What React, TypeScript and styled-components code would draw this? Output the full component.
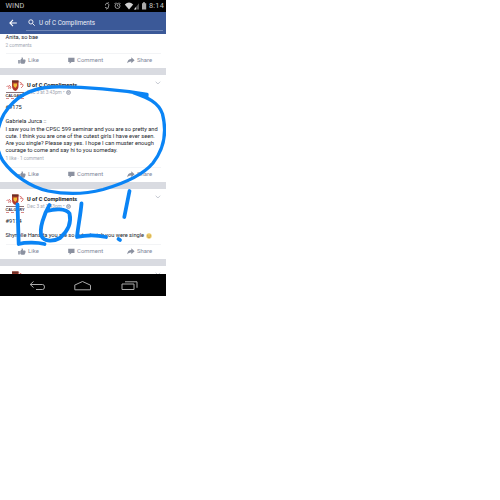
import React from 'react';
import styled, { createGlobalStyle } from 'styled-components';

const Global = createGlobalStyle`
  body { margin: 0; background: #fff; }
  * { box-sizing: border-box; }
`;

const Phone = styled.main`
  position: relative;
  display: flex;
  flex-direction: column;
  width: 166px;
  height: 296px;
  overflow: hidden;
  background: #fff;
  font-family: Roboto, sans-serif;
  color: #22252b;
`;

const StatusBar = styled.div`
  display: flex;
  align-items: center;
  height: 12px;
  flex: none;
  padding: 0 2px 0 5.5px;
  background: #000;
  color: #c4c4c4;
  font-size: 7.3px;
  line-height: 12px;
`;

const Carrier = styled.span`
  flex: 1;
  letter-spacing: 0.1px;
`;

const Clock = styled.span`
  margin-left: 1px;
  letter-spacing: 0.25px;
`;

const Header = styled.header`
  display: flex;
  align-items: center;
  height: 22px;
  flex: none;
  padding: 0 3px 0 9px;
  background: #3b5998;
`;

const SearchField = styled.div`
  display: flex;
  align-items: center;
  flex: 1;
  height: 15px;
  margin-left: 9px;
  padding-left: 2px;
  gap: 4px;
  border-bottom: 1px solid #6f86b6;
  color: #eef1f8;
  font-size: 6.3px;
  white-space: nowrap;
`;

const Feed = styled.section`
  height: 240px;
  flex: none;
  overflow: hidden;
  background: #d9dbe1;
`;

const Post = styled.article<{ $height: number }>`
  display: flex;
  flex-direction: column;
  height: ${(p) => p.$height}px;
  margin-bottom: 7px;
  padding: 0 5px 0 5.5px;
  background: #fff;
  overflow: hidden;
`;

const PostHead = styled.div`
  display: flex;
  flex: none;
  height: 29.1px;
  padding-top: 5px;
`;

const Byline = styled.div`
  flex: 1;
  margin-left: 3.5px;
`;

const Author = styled.div`
  height: 7.5px;
  margin-top: 2px;
  color: #15171c;
  font-size: 5.6px;
  line-height: 7.5px;
  font-weight: 700;
  white-space: nowrap;
`;

const Stamp = styled.div`
  display: flex;
  align-items: center;
  gap: 1.5px;
  height: 6px;
  color: #a3a8b3;
  font-size: 4.8px;
  line-height: 6px;
  white-space: nowrap;
`;

const ChevronSlot = styled.div`
  display: flex;
  align-items: flex-start;
  padding-top: 1px;
`;

const Line = styled.div<{ $track?: number }>`
  display: flex;
  align-items: center;
  gap: 2px;
  flex: none;
  height: 7.2px;
  font-size: 5.7px;
  line-height: 7.2px;
  letter-spacing: ${(p) => p.$track ?? 0}px;
  white-space: pre;
`;

const Counts = styled.div`
  flex: none;
  height: 10px;
  color: #a3a8b3;
  font-size: 4.7px;
  line-height: 10.5px;
  white-space: pre;
`;

const Actions = styled.div`
  display: grid;
  grid-template-columns: 50px 59px 1fr;
  flex: none;
  align-items: center;
  height: 15px;
  margin-top: auto;
  border-top: 1px solid #f3f4f6;
  padding: 0 0 1.5px 12.5px;
`;

const Action = styled.div`
  display: flex;
  align-items: center;
  gap: 2px;
  color: #80879a;
  font-size: 5.9px;
  line-height: 8px;
  font-weight: 400;
  letter-spacing: 0.05px;
  white-space: nowrap;
`;

const NavBar = styled.nav`
  display: flex;
  align-items: center;
  justify-content: space-between;
  height: 22px;
  flex: none;
  padding: 1px 28px 0 28.5px;
  background: #000;
`;

const Scribble = styled.svg`
  position: absolute;
  inset: 0;
  pointer-events: none;
`;

const CrestBox = styled.div`
  display: flex;
  flex-direction: column;
  width: 18px;
  height: 20px;
`;

const Wordmark = styled.div`
  height: 7px;
  border-top: 1px solid #8d7377;
  border-bottom: 1px dashed #d78986;
  color: #3c2a2f;
  font-family: "Liberation Sans", sans-serif;
  font-size: 3.9px;
  font-weight: 700;
  line-height: 5px;
  text-align: center;
`;

const Crest = () => (
  <CrestBox>
    <svg width="18" height="12" viewBox="0 0 18 12">
      <path d="M6 .5h6.500v5.500q0 3.500-3.200 5q-3.300-1.500-3.300-5z" fill="#b13a2b" />
      <path d="M6 .5h6.500v2H6z" fill="#6a3028" />
      <path d="M7.500 3.500h3.500v2.500l-1.700 2l-1.800-2z" fill="#f0bd35" />
      <path d="M.5 7q1-2 2.500-.5q1 1.500-1 2M3 5l2 2l-1 2M13.500 2l2 1l-1 2M15 4q3 0 2 2l-2 2" fill="none" stroke="#d9706e" strokeWidth=".9" />
    </svg>
    <Wordmark>CALGARY</Wordmark>
  </CrestBox>
);

const Chevron = () => (
  <svg width="6" height="4" viewBox="0 0 6 4">
    <path d="M.7.700l2.200 2.300L5.200.700" fill="none" stroke="#b8bcc6" strokeWidth=".8" />
  </svg>
);

const Thumb = () => (
  <svg width="8" height="7" viewBox="0 0 8 7">
    <path d="M.2 3h1.600v3.500H.2zM2.300 3.100L3.700 1.600V.2q1.500-.1 1.300 1.500l-.2.900h2.100q1 .3.600 1.200q.2.600-.2 1q0 .7-.4.900q0 1-.9 1H3.500L2.300 5.900z" fill="#8b91a0" />
  </svg>
);

const Bubble = () => (
  <svg width="7" height="7" viewBox="0 0 7 7">
    <path d="M.2.700h6.300v4.400H3.500L1.600 6.700V5.100H.2z" fill="#8b91a0" />
  </svg>
);

const ShareArrow = () => (
  <svg width="8" height="7" viewBox="0 0 8 7">
    <path d="M4.300.2L7.600 3.200L4.300 6.200V4.400Q1.800 4.200.2 6.300Q.6 2.100 4.300 2z" fill="#8b91a0" />
  </svg>
);

const Globe = () => (
  <svg width="5" height="5" viewBox="0 0 5 5">
    <circle cx="2.500" cy="2.500" r="2" fill="#d6d9df" stroke="#9aa0ad" strokeWidth=".8" />
    <path d="M1 1.700l1.500.4l-.5 1.400M3 1l1 1.500" fill="none" stroke="#9aa0ad" strokeWidth=".7" />
  </svg>
);

const Smiley = () => (
  <svg width="6" height="6" viewBox="0 0 6 6">
    <circle cx="3" cy="3" r="2.700" fill="#f0cf6b" />
    <path d="M1.300 2.300h1M3.700 2.300h1M1.500 3.700q1.500 1.500 3 0" fill="none" stroke="#a5793a" strokeWidth=".6" />
  </svg>
);

const StatusIcons = () => (
  <svg width="43" height="12" viewBox="0 0 43 12" fill="none" stroke="#b5b5b5" strokeWidth=".8">
    <path d="M-.8 6.500L1.700 3L4 4.500L3 8.500L-.8 7M.9 8.500l1 .8M2.700 2l1 1" />
    <circle cx="12.500" cy="6" r="2.500" />
    <path d="M12.500 4.500V6l1 .6M9.500 4l1.500-1.500M14 2.500L15.500 4" />
    <path d="M19.800 4.500Q24 .600 28.200 4.500L24 9.400z" fill="#d0d0d0" stroke="none" />
    <path d="M29 9.400h5V3.200z" fill="#555" stroke="none" />
    <path d="M29 9.400h2V7z" fill="#ddd" stroke="none" />
    <path d="M37 3.200h1v-.9h2v.9h1.200v6.400H37z" fill="#aaa" stroke="none" />
  </svg>
);

const ActionRow = () => (
  <Actions>
    <Action><Thumb />Like</Action>
    <Action><Bubble />Comment</Action>
    <Action><ShareArrow />Share</Action>
  </Actions>
);

const PostHeader = ({ date }: { date: string }) => (
  <PostHead>
    <Crest />
    <Byline>
      <Author>U of C Compliments</Author>
      <Stamp>{date}<Globe /></Stamp>
    </Byline>
    <ChevronSlot><Chevron /></ChevronSlot>
  </PostHead>
);

export default function App() {
  return (
    <>
      <Global />
      <Phone>
        <StatusBar>
          <Carrier>WIND</Carrier>
          <StatusIcons />
          <Clock>8:14</Clock>
        </StatusBar>
        <Header>
          <svg width="8" height="8" viewBox="0 0 8 8">
            <path d="M7.800 4H1M4 .9L.9 4L4 7.100" fill="none" stroke="#fff" strokeWidth="1.100" />
          </svg>
          <SearchField>
            <svg width="7" height="7" viewBox="0 0 7 7">
              <path d="M4.500 4.500L6.700 6.700M5 2.900a2.100 2.100 0 1 1-4.200 0a2.100 2.100 0 1 1 4.200 0" fill="none" stroke="#fff" strokeWidth=".9" />
            </svg>
            U of C Compliments
          </SearchField>
        </Header>
        <Feed>
          <Post $height={34}>
            <Line>Anita, so bae</Line>
            <Counts>2 comments</Counts>
            <ActionRow />
          </Post>
          <Post $height={107}>
            <PostHeader date="Dec 3 at 3:43pm •" />
            <Line>#9175</Line>
            <Line> </Line>
            <Line>Gabriela Jurca ::</Line>
            <Line $track={-0.01}>I saw you in the CPSC 599 seminar and you are so pretty and</Line>
            <Line $track={0.01}>cute. I think you are one of the cutest girls I have ever seen.</Line>
            <Line>Are you single? Please say yes. I hope I can muster enough</Line>
            <Line>courage to come and say hi to you someday.</Line>
            <Counts>1 like · 1 comment</Counts>
            <ActionRow />
          </Post>
          <Post $height={70}>
            <PostHeader date="Dec 3 at 3:43pm •" />
            <Line>#9174</Line>
            <Line> </Line>
            <Line $track={-0.03}>Shynelle Hanada you are so cute. I wish you were single<Smiley /></Line>
            <ActionRow />
          </Post>
          <Post $height={50}>
            <PostHeader date="Dec 3 at 3:42pm •" />
          </Post>
        </Feed>
        <NavBar>
          <svg width="17" height="12" viewBox="0 0 17 12" fill="none" stroke="#aaa" strokeWidth="1">
            <path d="M4.500 1.500L1.200 4.500L4.500 7.500M1.200 4.500h12.300q2 0 2 2.500q0 2.500-2 2.500H7" />
          </svg>
          <svg width="18" height="12" viewBox="0 0 18 12" fill="none" stroke="#aaa" strokeWidth="1">
            <path d="M.5 5.200L8.500 1.500L16.500 5.200V9.800H.8V5.200" />
          </svg>
          <svg width="17" height="12" viewBox="0 0 17 12" fill="none" stroke="#aaa" strokeWidth="1">
            <path d="M1 4h12v5.500H1zM4 1.800h12v6" />
          </svg>
        </NavBar>
        <Scribble width="166" height="296" viewBox="0 0 166 296" fill="none" stroke="#0a84f5" strokeWidth="3.800" strokeLinecap="round" strokeLinejoin="round">
          <path strokeWidth="3.300" d="M147 96L133 92.500C145 97 158 101 162.500 114C167 132 164 149 153 163C143 175 122 184 103 189.500C84 194.500 63 194 48 191C31 187.500 13 175 3 161C-7 145-3 127 4 114C14 98 30 88 52 87C82 86.500 120 90 147 94.500" />
          <path d="M17.500 204.500L18.700 244C26 242 38 242.500 44.500 244" />
          <path d="M49.500 205C44 214 39 229 41.500 236C44 242 54 241.500 60 238C68 231 71.500 222 69.500 213.500C66 208 54 209 47 211" />
          <path d="M81.500 203.500C80.500 215 78 227 77 237C86 235 97 235 106 237" />
          <path d="M118.500 239L120 240M129.500 191L124.300 217" />
        </Scribble>
      </Phone>
    </>
  );
}
